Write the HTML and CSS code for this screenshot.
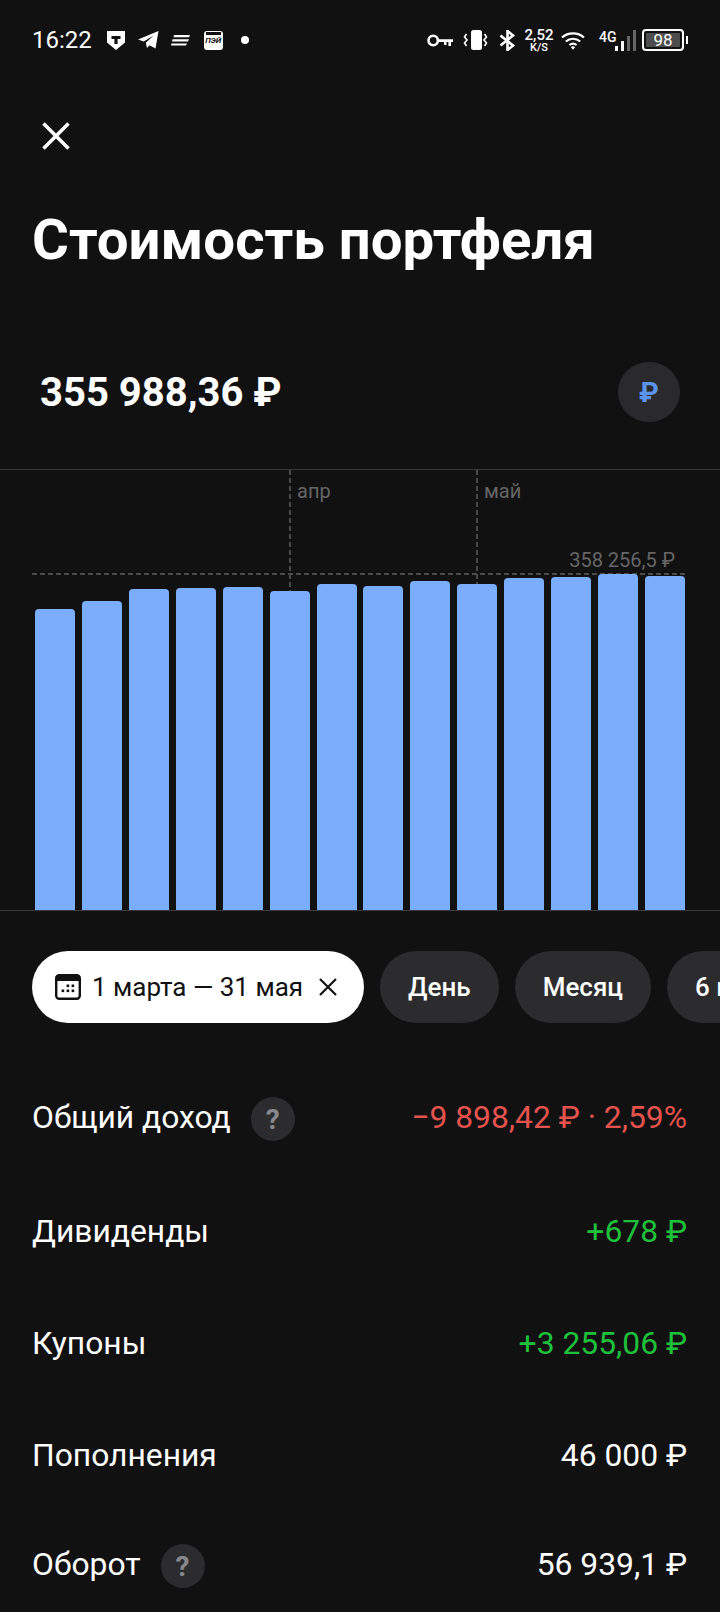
FILE: index.html
```html
<!DOCTYPE html>
<html lang="ru">
<head>
    <meta charset="UTF-8">
    <meta name="viewport" content="width=device-width, initial-scale=1.0">
    <title>Стоимость портфеля</title>
    <link rel="stylesheet" href="styles.css">
</head>
<body>
    <div class="status">
        <div class="status-left">
            <span class="time">16:22</span>
            <svg class="ic-shield" width="18" height="19" viewBox="0 0 18 19"><path d="M0 0H18V11.5L9 19L0 11.5Z" fill="#fff"/><path d="M4.5 5H13.5V8H10.6V13H7.4V8H4.5Z" fill="#111"/></svg>
            <svg class="ic-tg" width="21" height="18" viewBox="0 0 21 18"><path d="M0 8.6L20.5 0L17.5 17.5L11.5 14.2L9 17L7.8 11.8L15.5 4.5L5.8 10.6Z" fill="#fff"/></svg>
            <svg class="ic-lines" width="19" height="11" viewBox="0 0 19 11"><path d="M3 0H19L18 2.2H2.5ZM1.5 4.2H18L17 6.4H1ZM.5 8.4H16L15 10.6H0Z" fill="#fff"/></svg>
            <span class="ic-pay"><span class="pay-top"></span><span class="pay-text">ПЭЙ</span></span>
            <span class="dot"></span>
        </div>
        <div class="status-right">
            <svg class="ic-key" width="26" height="13" viewBox="0 0 26 13"><circle cx="6.2" cy="6.5" r="4.7" fill="none" stroke="#fff" stroke-width="2.6"/><path d="M10 5.3H26V8H24V12H21.4V8H19.5V11H17V8H10Z" fill="#fff"/></svg>
            <svg class="ic-vibe" width="25" height="20" viewBox="0 0 25 20"><rect x="8" y="0" width="11" height="20" rx="2.5" fill="#fff"/><path d="M3.5 4L1.5 7L4 10L1.5 13L3.5 16M21.5 4L23.5 7L21 10L23.5 13L21.5 16" fill="none" stroke="#fff" stroke-width="1.6"/></svg>
            <svg class="ic-bt" width="17" height="21" viewBox="0 0 17 21"><path d="M1.5 5.5L14 15.5L8.5 20V1L14 5.5L1.5 15.5" fill="none" stroke="#fff" stroke-width="2.6"/></svg>
            <div class="speed"><span class="speed-num">2,52</span><span class="speed-unit">K/S</span></div>
            <svg class="ic-wifi" width="24" height="19" viewBox="0 0 24 19"><path d="M1 6.5C7 1 17 1 23 6.5M4.8 10.5C9 6.8 15 6.8 19.2 10.5M8.4 14C10.5 12.4 13.5 12.4 15.6 14" fill="none" stroke="#fff" stroke-width="2.2"/><path d="M9.8 16L12 18.8L14.2 16C13 15 11 15 9.8 16Z" fill="#fff"/></svg>
            <div class="net">
                <span class="net-label">4G</span>
                <svg width="22" height="21" viewBox="0 0 22 21"><rect x="0" y="16" width="3" height="5" fill="#fff"/><rect x="6" y="11" width="3" height="10" fill="#fff"/><rect x="12" y="6" width="3" height="15" fill="#666"/><rect x="18" y="0" width="3" height="21" fill="#666"/></svg>
            </div>
            <div class="battery"><span class="battery-fill">98</span></div>
            <span class="battery-nub"></span>
        </div>
    </div>

    <svg class="close" width="28" height="28" viewBox="0 0 28 28"><path d="M1.5 1.5L26.5 26.5M26.5 1.5L1.5 26.5" stroke="#fff" stroke-width="3.6"/></svg>

    <h1>Стоимость портфеля</h1>

    <div class="total">
        <span class="total-value">355 988,36 ₽</span>
        <span class="currency">₽</span>
    </div>

    <div class="chart">
        <div class="month month-apr"><span>апр</span></div>
        <div class="month month-may"><span>май</span></div>
        <div class="max-line"><span>358 256,5 ₽</span></div>
        <div class="bars">
            <div class="bar" style="height:301px"></div>
            <div class="bar" style="height:309px"></div>
            <div class="bar" style="height:321px"></div>
            <div class="bar" style="height:322px"></div>
            <div class="bar" style="height:323px"></div>
            <div class="bar" style="height:319px"></div>
            <div class="bar" style="height:326px"></div>
            <div class="bar" style="height:324px"></div>
            <div class="bar" style="height:329px"></div>
            <div class="bar" style="height:326px"></div>
            <div class="bar" style="height:332px"></div>
            <div class="bar" style="height:333px"></div>
            <div class="bar" style="height:336px"></div>
            <div class="bar" style="height:334px"></div>
        </div>
    </div>

    <div class="chips">
        <div class="chip chip-active">
            <svg width="26" height="26" viewBox="0 0 26 26"><rect x="1.2" y="1.2" width="23.6" height="23.6" rx="3" fill="none" stroke="#111" stroke-width="2.4"/><path d="M1 4a3 3 0 0 1 3-3H22a3 3 0 0 1 3 3V7H1Z" fill="#111"/><g fill="#111"><rect x="11.6" y="10.5" width="2.6" height="2.6"/><rect x="16.6" y="10.5" width="2.6" height="2.6"/><rect x="6.6" y="15.5" width="2.6" height="2.6"/><rect x="11.6" y="15.5" width="2.6" height="2.6"/><rect x="16.6" y="15.5" width="2.6" height="2.6"/></g></svg>
            <span>1 марта — 31 мая</span>
            <svg class="chip-x" width="18" height="18" viewBox="0 0 18 18"><path d="M1 1L17 17M17 1L1 17" stroke="#111" stroke-width="2.2"/></svg>
        </div>
        <div class="chip">День</div>
        <div class="chip">Месяц</div>
        <div class="chip">6 мес</div>
    </div>

    <div class="rows">
        <div class="row">
            <div class="row-name">Общий доход <span class="help">?</span></div>
            <div class="loss">−9 898,42 ₽ · 2,59%</div>
        </div>
        <div class="row">
            <div class="row-name">Дивиденды</div>
            <div class="gain">+678 ₽</div>
        </div>
        <div class="row">
            <div class="row-name">Купоны</div>
            <div class="gain">+3 255,06 ₽</div>
        </div>
        <div class="row">
            <div class="row-name">Пополнения</div>
            <div>46 000 ₽</div>
        </div>
        <div class="row">
            <div class="row-name">Оборот <span class="help">?</span></div>
            <div>56 939,1 ₽</div>
        </div>
    </div>
</body>
</html>
```
FILE: styles.css
```css
* {
    box-sizing: border-box;
}
html, body {
    margin: 0;
    height: 1612px;
    overflow: hidden;
}
body {
    background-color: #111112;
    color: white;
    font-family: Roboto, sans-serif;
    width: 720px;
}
.status {
    height: 80px;
    padding: 0 32px;
    display: flex;
    justify-content: space-between;
    align-items: center;
}
.status-left, .status-right {
    display: flex;
    align-items: center;
}
.time {
    font-size: 24px;
    margin-right: 15px;
}
.ic-tg {
    margin-left: 13px;
}
.ic-lines {
    margin-left: 12px;
}
.ic-pay {
    display: block;
    width: 19px;
    height: 19px;
    margin-left: 14px;
    background: white;
    border-radius: 3px;
    position: relative;
    overflow: hidden;
}
.pay-top {
    display: block;
    height: 3px;
    background: #111;
    margin: 1px 2px 0;
}
.pay-text {
    display: block;
    color: #111;
    font-size: 8px;
    font-weight: 700;
    font-style: italic;
    line-height: 11px;
    text-align: center;
}
.dot {
    width: 8px;
    height: 8px;
    border-radius: 50%;
    background: white;
    margin-left: 18px;
}
.ic-vibe {
    margin-left: 10px;
}
.ic-bt {
    margin-left: 11px;
}
.speed {
    display: flex;
    flex-direction: column;
    align-items: center;
    margin-left: 8px;
    width: 30px;
}
.speed-num {
    font-size: 15px;
    font-weight: 500;
    line-height: 15px;
}
.speed-unit {
    font-size: 11px;
    font-weight: 500;
    line-height: 10px;
}
.ic-wifi {
    margin-left: 7px;
}
.net {
    display: flex;
    align-items: flex-end;
    margin-left: 14px;
}
.net-label {
    font-size: 14px;
    font-weight: 500;
    align-self: flex-start;
    line-height: 15px;
    width: 16px;
}
.battery {
    width: 42px;
    height: 22px;
    border: 2px solid white;
    border-radius: 4px;
    padding: 2px;
    margin-left: 5px;
}
.battery-fill {
    display: block;
    width: 34px;
    height: 14px;
    background: #4d4d4d;
    border-radius: 1px;
    font-size: 17px;
    line-height: 14px;
    text-align: center;
}
.battery-nub {
    width: 2px;
    height: 8px;
    background: white;
    margin-left: 2px;
}
.close {
    display: block;
    margin: 42px 0 0 42px;
}
h1 {
    margin: 58px 0 0 32px;
    font-size: 56.4px;
    line-height: 64px;
    font-weight: 700;
}
.total {
    margin-top: 90px;
    height: 60px;
    padding: 0 40px;
    display: flex;
    justify-content: space-between;
    align-items: center;
}
.total-value {
    font-size: 40px;
    font-weight: 700;
}
.currency {
    width: 62px;
    height: 60px;
    border-radius: 50%;
    background: #2a2a2c;
    color: #5b94ea;
    font-size: 28px;
    font-weight: 700;
    display: flex;
    justify-content: center;
    align-items: center;
}
.chart {
    position: relative;
    height: 442px;
    margin-top: 47px;
    border-top: 1px solid #3a3a3c;
    border-bottom: 1px solid #3a3a3c;
}
.bars {
    height: 100%;
    padding: 0 35px;
    display: flex;
    justify-content: space-between;
    align-items: flex-end;
}
.bar {
    width: 40px;
    background: #7aaefc;
    border-radius: 4px 4px 0 0;
    position: relative;
}
.month {
    position: absolute;
    top: 0;
    height: 122px;
    padding: 8px 0 0 8px;
    color: #666;
    font-size: 20px;
    line-height: 26px;
    background: repeating-linear-gradient(to bottom, #4a4a4a 0, #4a4a4a 5px, transparent 5px, transparent 8px) left top / 2px 100% no-repeat;
}
.month-apr {
    left: 289px;
}
.month-may {
    left: 476px;
}
.max-line {
    position: absolute;
    left: 32px;
    width: 654px;
    top: 74px;
    height: 31px;
    padding: 3px 11px 0 0;
    text-align: right;
    color: #666;
    font-size: 20px;
    line-height: 26px;
    background: repeating-linear-gradient(to right, #4a4a4a 0, #4a4a4a 5px, transparent 5px, transparent 8px) left bottom / 100% 2px no-repeat;
}
.chips {
    margin-top: 40px;
    padding-left: 32px;
    display: flex;
    gap: 16px;
    width: 720px;
    overflow: hidden;
}
.chip {
    height: 72px;
    padding: 0 28px;
    border-radius: 36px;
    background: #2c2c2e;
    font-size: 26px;
    font-weight: 500;
    display: flex;
    align-items: center;
    flex: none;
}
.chip-active {
    background: white;
    color: #111;
    font-weight: 400;
    padding: 0 27px 0 23px;
}
.chip-active span {
    margin: 0 16px 0 11px;
}
.rows {
    margin-top: 76px;
    padding: 0 33px 0 32px;
    display: flex;
    flex-direction: column;
    gap: 76px;
    font-size: 31.8px;
}
.row {
    display: flex;
    justify-content: space-between;
    align-items: center;
    height: 36px;
}
.row:first-child {
    margin-bottom: 2px;
}
.row:last-child {
    margin-top: -3px;
}
.row-name {
    display: flex;
    align-items: center;
    gap: 20px;
}
.help {
    width: 44px;
    height: 44px;
    margin-top: 4px;
    border-radius: 50%;
    background: #2c2c2e;
    color: #88888d;
    font-size: 28px;
    font-weight: 700;
    display: flex;
    justify-content: center;
    align-items: center;
}
.loss {
    color: #e5534f;
}
.gain {
    color: #1fc13c;
}
```
